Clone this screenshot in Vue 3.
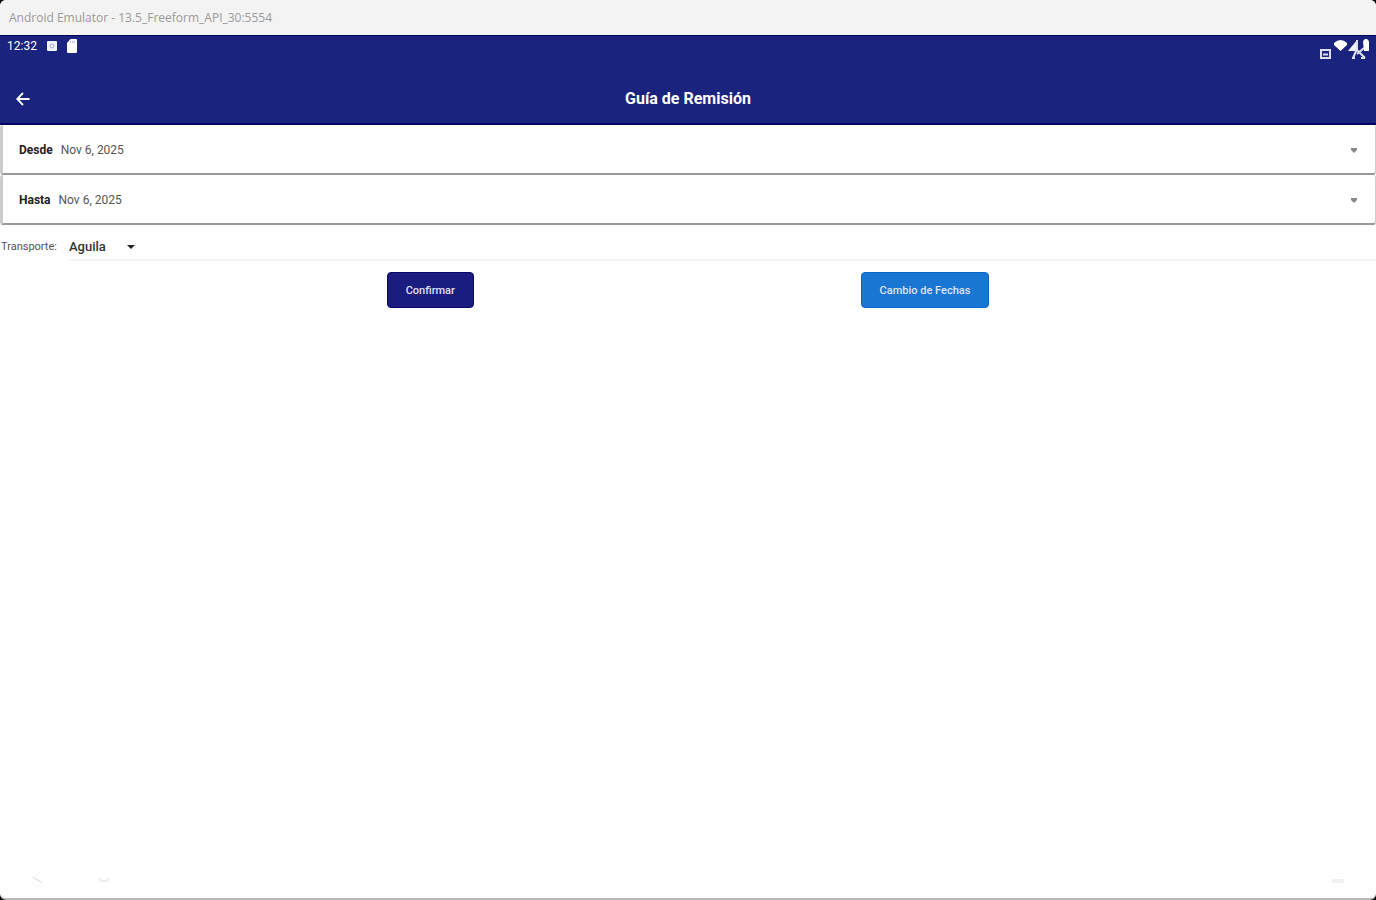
<template>
  <div class="emulator">
    <header class="window-bar">Android Emulator - 13.5_Freeform_API_30:5554</header>

    <div class="app-header">
      <div class="status-bar">
        <div class="status-left">
          <span class="clock">12:32</span>
          <svg width="10" height="10" viewBox="0 0 10 10">
            <rect width="10" height="10" rx="1" fill="#f1f2fb" />
            <circle cx="5" cy="5" r="2" fill="none" stroke="#a9acd3" stroke-width="1" />
          </svg>
          <svg width="10" height="14" viewBox="0 0 10 14">
            <path d="M3.500 0H9a1 1 0 0 1 1 1v12a1 1 0 0 1-1 1H1a1 1 0 0 1-1-1V4z" fill="#fff" />
            <path d="M3.500 2v2M5.500 2v2M7.500 2v2" stroke="#a9acd3" stroke-width="0.800" />
          </svg>
        </div>
        <svg class="status-right" width="54" height="24" viewBox="0 0 54 24">
          <path d="M3 12h9v8H3z" fill="none" stroke="#dcdef2" stroke-width="2" />
          <path d="M5 16.500h5" stroke="#dcdef2" stroke-width="2" />
          <path d="M16 5q6.500-6 13 0v2L22.500 13 16 7z" fill="#fff" />
          <path d="M30 13L39 2v11z" fill="#f1f2fb" />
          <path d="M39 2v9l-4 9M39 12l8 8M34 20h3M43 20h4M39 16l7-6" fill="none" stroke="#dcdef2" stroke-width="2" />
          <path d="M45 4q0-2 1.500-2V1h3v1Q51 2 51 4v9h-5z" fill="#fff" />
        </svg>
      </div>

      <div class="toolbar">
        <button class="back" type="button" aria-label="Atrás">
          <svg width="14" height="14" viewBox="0 0 14 14">
            <path d="M13.500 7H1.500M7 1L1.200 7 7 13" fill="none" stroke="#fff" stroke-width="1.800" />
          </svg>
        </button>
        <h1>Guía de Remisión</h1>
      </div>
    </div>

    <main>
      <button v-for="field in dates" :key="field.label" class="date-field" type="button">
        <b>{{ field.label }}</b>
        <span>{{ field.value }}</span>
        <svg class="caret" width="8" height="5" viewBox="0 0 8 5">
          <path d="M1 0h6v2L4 5 1 2z" fill="#888" />
        </svg>
      </button>

      <div class="transport">
        <label for="transporte">Transporte:</label>
        <div class="select-wrap">
          <select id="transporte" v-model="transport">
            <option>Aguila</option>
          </select>
          <svg class="select-caret" width="8" height="4" viewBox="0 0 8 4">
            <path d="M0 0h8L4 4z" fill="#222" />
          </svg>
        </div>
      </div>

      <div class="actions">
        <button class="btn confirm" type="button">Confirmar</button>
        <button class="btn change" type="button">Cambio de Fechas</button>
      </div>
    </main>

    <footer class="nav-bar">
      <svg width="12" height="8" viewBox="0 0 12 8">
        <path d="M1 1l9 6" stroke="#e4e4e4" stroke-width="1.500" />
      </svg>
      <svg class="home" width="12" height="8" viewBox="0 0 12 8">
        <path d="M1 2q1 3 3 3h4q2 0 3-3" fill="none" stroke="#e8e8e8" stroke-width="1.500" />
      </svg>
      <svg class="recent" width="12" height="8" viewBox="0 0 12 8">
        <path d="M0 5h12" stroke="#f1f1f1" stroke-width="4" />
      </svg>
    </footer>
  </div>
</template>

<script setup>
import { ref } from 'vue'

const dates = ref([
  { label: 'Desde', value: 'Nov 6, 2025' },
  { label: 'Hasta', value: 'Nov 6, 2025' },
])

const transport = ref('Aguila')
</script>

<style>
body {
  margin: 0;
  background: #000;
}
</style>

<style scoped>
.emulator {
  display: flex;
  flex-direction: column;
  box-sizing: border-box;
  min-height: 100vh;
  overflow: hidden;
  background: #fefefe;
  border-bottom: 2px solid #b8b8b8;
  border-radius: 6px;
  font-family: Roboto, "Liberation Sans", sans-serif;
  font-size: 12px;
  color: #333;
}

button,
select {
  font-family: inherit;
}

svg {
  display: block;
  flex: none;
}

.window-bar {
  padding: 0 9px;
  background: #f3f3f3;
  font-family: "Open Sans", "Noto Sans", sans-serif;
  font-size: 12px;
  line-height: 35px;
  color: #9a9a9a;
}

.app-header {
  background: #1a237e;
  border-top: 1px solid #04045f;
  border-bottom: 2px solid #04045f;
  color: #fff;
}

.status-bar {
  display: flex;
  justify-content: space-between;
  box-sizing: border-box;
  height: 39px;
  padding: 2px 4px 0 7px;
}

.status-left {
  display: flex;
  align-items: center;
  gap: 10px;
  height: 16px;
}

.clock {
  font-size: 12px;
  line-height: 16px;
}

.toolbar {
  display: grid;
  grid-template-columns: 48px 1fr 48px;
  align-items: center;
  height: 48px;
}

.back {
  display: flex;
  align-items: center;
  height: 48px;
  padding: 0 16px;
  background: none;
  border: 0;
}

h1 {
  margin: 0;
  font-size: 16px;
  font-weight: 700;
  line-height: 24px;
  text-align: center;
}

.date-field {
  display: flex;
  align-items: center;
  gap: 8px;
  box-sizing: border-box;
  width: 100%;
  height: 50px;
  padding: 2px 17px 0 16px;
  background: #fff;
  border: solid #999;
  border-width: 0 1px 2px 3px;
  border-left-color: #ccc;
  border-right-color: #ccc;
  border-radius: 3px;
  font-size: 12px;
  color: #555;
}

.date-field b {
  color: #222;
}

.caret {
  margin-left: auto;
}

.transport {
  display: flex;
  gap: 12px;
  padding-left: 1px;
}

.transport label {
  padding-top: 8px;
  font-size: 11px;
  line-height: 28px;
  color: #555;
}

.select-wrap {
  position: relative;
  flex: 1;
  border-bottom: 2px solid #f5f5f5;
}

select {
  display: block;
  width: 100%;
  height: 34px;
  padding: 8px 0 0;
  appearance: none;
  background: none;
  border: 0;
  font-size: 13px;
  font-weight: 500;
  color: #333;
}

.select-caret {
  position: absolute;
  top: 20px;
  left: 58px;
  pointer-events: none;
}

.actions {
  display: flex;
  justify-content: space-evenly;
  padding-top: 11px;
}

.btn {
  height: 36px;
  padding: 0 18px;
  border: 1px solid;
  border-radius: 4px;
  font-size: 11px;
  font-weight: 500;
  color: #dfe3f5;
}

.confirm {
  background: #1a1c80;
  border-color: #08086c;
}

.change {
  background: #1976d2;
  border-color: #0c66c6;
}

.nav-bar {
  display: flex;
  align-items: center;
  margin-top: auto;
  padding: 0 32px 14px;
}

.home {
  margin-left: 54px;
}

.recent {
  margin-left: auto;
}
</style>
